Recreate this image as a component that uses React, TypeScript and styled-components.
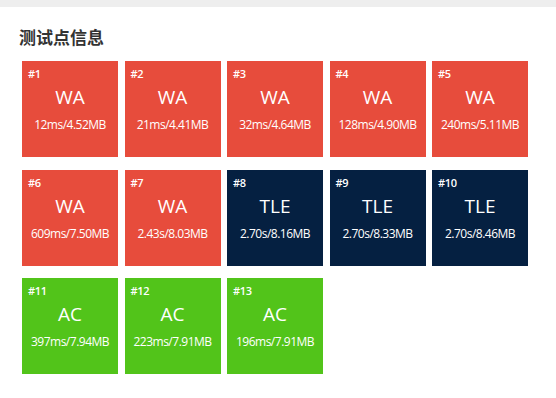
import React from "react";
import styled, { createGlobalStyle } from "styled-components";

type Status = "WA" | "TLE" | "AC";

interface TestCase {
  id: number;
  status: Status;
  time: string;
  memory: string;
}

const cases: TestCase[] = [
  { id: 1, status: "WA", time: "12ms", memory: "4.52MB" },
  { id: 2, status: "WA", time: "21ms", memory: "4.41MB" },
  { id: 3, status: "WA", time: "32ms", memory: "4.64MB" },
  { id: 4, status: "WA", time: "128ms", memory: "4.90MB" },
  { id: 5, status: "WA", time: "240ms", memory: "5.11MB" },
  { id: 6, status: "WA", time: "609ms", memory: "7.50MB" },
  { id: 7, status: "WA", time: "2.43s", memory: "8.03MB" },
  { id: 8, status: "TLE", time: "2.70s", memory: "8.16MB" },
  { id: 9, status: "TLE", time: "2.70s", memory: "8.33MB" },
  { id: 10, status: "TLE", time: "2.70s", memory: "8.46MB" },
  { id: 11, status: "AC", time: "397ms", memory: "7.94MB" },
  { id: 12, status: "AC", time: "223ms", memory: "7.91MB" },
  { id: 13, status: "AC", time: "196ms", memory: "7.91MB" },
];

const statusColors: Record<Status, string> = {
  WA: "#e74c3c",
  TLE: "#052041",
  AC: "#52c41a",
};

const App: React.FC = () => {
  return (
    <>
      <GlobalStyle />
      <TopBar />
      <Panel>
        <Title>测试点信息</Title>
        <CaseGrid>
          {cases.map((c) => (
            <CaseBox key={c.id} $status={c.status}>
              <CaseId>#{c.id}</CaseId>
              <CaseStatus>{c.status}</CaseStatus>
              <CaseUsage>
                {c.time}/{c.memory}
              </CaseUsage>
            </CaseBox>
          ))}
        </CaseGrid>
      </Panel>
    </>
  );
};

export default App;

const GlobalStyle = createGlobalStyle`
  body {
    margin: 0;
    background: #fff;
    font-family: "Open Sans", "Noto Sans CJK SC", sans-serif;
  }
`;

const TopBar = styled.div`
  height: 7px;
  background: #eeeeee;
`;

const Panel = styled.div`
  padding: 18px 20px 0 22px;
`;

const Title = styled.h3`
  margin: 0 0 12px -3px;
  font-family: "Noto Sans CJK SC", sans-serif;
  font-size: 17px;
  line-height: 24px;
  font-weight: 700;
  color: #333;
`;

const CaseGrid = styled.div`
  display: grid;
  grid-template-columns: repeat(5, 96px);
  column-gap: 6.5px;
  row-gap: 12.5px;
`;

const CaseBox = styled.div<{ $status: Status }>`
  height: 96px;
  background: ${(p) => statusColors[p.$status]};
  color: #fff;
  display: flex;
  flex-direction: column;
  align-items: center;
`;

const CaseId = styled.div`
  align-self: flex-start;
  margin: 6px 0 0 6px;
  font-size: 11px;
  line-height: 14px;
  font-weight: 600;
  letter-spacing: -0.3px;
`;

const CaseStatus = styled.div`
  margin-top: 3px;
  font-size: 19px;
  line-height: 27px;
`;

const CaseUsage = styled.div`
  margin-top: 6px;
  font-size: 12px;
  line-height: 16px;
  letter-spacing: -0.5px;
`;
